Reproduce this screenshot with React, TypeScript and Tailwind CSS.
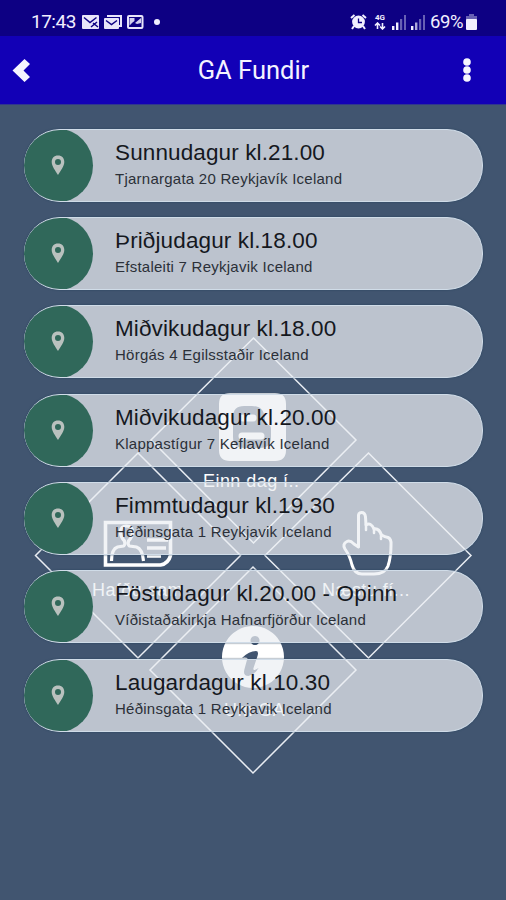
import React from "react";

const meetings = [
  { title: "Sunnudagur kl.21.00", place: "Tjarnargata 20 Reykjavík Iceland" },
  { title: "Þriðjudagur kl.18.00", place: "Efstaleiti 7 Reykjavik Iceland" },
  { title: "Miðvikudagur kl.18.00", place: "Hörgás 4 Egilsstaðir Iceland" },
  { title: "Miðvikudagur kl.20.00", place: "Klappastígur 7 Keflavík Iceland" },
  { title: "Fimmtudagur kl.19.30", place: "Héðinsgata 1 Reykjavik Iceland" },
  { title: "Föstudagur kl.20.00 - Opinn", place: "Víðistaðakirkja Hafnarfjörður Iceland" },
  { title: "Laugardagur kl.10.30", place: "Héðinsgata 1 Reykjavik Iceland" },
];

function Signal({ bars }: { bars: number }) {
  return (
    <svg width="14" height="15" viewBox="0 0 14 15" fill="#f1efff">
      <rect x="0" y="11" width="2.4" height="4" />
      <rect x="4" y="7.5" width="2.4" height="7.5" opacity={bars > 1 ? 1 : 0.7} />
      <rect x="8" y="4" width="2.2" height="11" opacity="0.4" />
      <rect x="12" y="0" width="2" height="15" opacity="0.4" />
    </svg>
  );
}

function StatusBar() {
  return (
    <div className="flex h-9 items-center bg-[#0d0083] pt-2 pl-[31px] pr-[29px] text-[#f1efff]">
      <span className="w-[51px] text-[19px] leading-[28px] tracking-[-0.5px] font-[Roboto,sans-serif]">17:43</span>
      <svg width="65" height="16" viewBox="0 0 65 16">
        <rect x="0" y="1" width="17" height="14" rx="1" fill="#e8e5fa" />
        <path d="M2 3.5l6 5 6.5-5M9 13l6-5M11 9l5 4" stroke="#0d0083" strokeWidth="1.5" fill="none" />
        <path d="M25 2h14v10h-2" stroke="#e8e5fa" strokeWidth="2" fill="none" />
        <rect x="22" y="4" width="15" height="11" rx="1" fill="#e8e5fa" />
        <path d="M24 6.5l5.5 4 5.5-4" stroke="#0d0083" strokeWidth="1.5" fill="none" />
        <rect x="46" y="2" width="14.5" height="12" rx="1" fill="none" stroke="#e8e5fa" strokeWidth="2" />
        <path d="M47.5 4h5v3l-2 1.5-3 3zM53 9l6-5v5l-4 1z" fill="#e8e5fa" opacity="0.9" />
      </svg>
      <span className="ml-[7px] h-[6px] w-[6px] rounded-full bg-[#f1efff]" />
      <div className="ml-auto flex items-center">
        <svg width="17" height="16" viewBox="0 0 17 16">
          <path d="M1 4l3.5-3M16 4l-3.5-3M4 12l-2 3M13 12l2 3" stroke="#f1efff" strokeWidth="2" />
          <circle cx="8.5" cy="8" r="6.4" fill="#f1efff" />
          <path d="M8.5 4.5V8.5h3.5" stroke="#0d0083" strokeWidth="1.3" fill="none" />
        </svg>
        <span className="ml-[6px] flex w-[14px] flex-col items-center font-[Roboto,sans-serif] text-[8px] leading-[8px] font-bold">
          4G
          <svg width="12" height="8" viewBox="0 0 12 8">
            <path d="M3.5 7V1M1 3.5l2.5-2.5L6 3.5M8.5 1v6M6 4.5L8.5 7 11 4.5" stroke="#f1efff" strokeWidth="1.6" fill="none" />
          </svg>
        </span>
        <span className="ml-[5px]"><Signal bars={2} /></span>
        <span className="ml-[5px]"><Signal bars={1} /></span>
        <span className="ml-[5px] w-[36px] whitespace-nowrap text-[18.5px] leading-[28px] tracking-[-0.4px] font-[Roboto,sans-serif]">69%</span>
        <svg width="11" height="16" viewBox="0 0 11 16" fill="#f1efff">
          <path d="M3 0h5v2h3v4H0V2h3z" opacity="0.4" />
          <rect y="5" width="11" height="11" rx="1" />
        </svg>
      </div>
    </div>
  );
}

function AppBar() {
  return (
    <div className="flex h-[69px] items-center justify-between border-b border-[#30368d] bg-[#1200b6] pr-[35px] pl-[12px]">
      <svg width="19" height="25" viewBox="0 0 19 25" fill="#f6f5ff">
        <path d="M12.5 1L.5 12.5l12 11.5 5.500-5L11.500 12.500 18 6z" />
      </svg>
      <h1 className="ml-[13px] font-[Roboto,sans-serif] text-[25.5px] leading-[30px] text-[#f4f3ff]">GA Fundir</h1>
      <svg width="8" height="24" viewBox="0 0 8 24" fill="#f6f5ff">
        <circle cx="4" cy="4" r="3.8" />
        <circle cx="4" cy="12" r="3.8" />
        <circle cx="4" cy="20" r="3.8" />
      </svg>
    </div>
  );
}

/* Diamond menu of the home screen, showing through the list */
function DiamondMenu() {
  const label = "absolute whitespace-nowrap text-[18px] leading-[20px] tracking-[0.45px] text-white";
  return (
    <div className="absolute inset-0">
      <svg className="absolute top-0 left-0" width="506" height="795" viewBox="0 105 506 795" fill="none">
        <g stroke="#e9edf3" strokeWidth="1.5">
          <path d="M253.5 338L356 440 253.5 543 151 440z" />
          <path d="M138 453L240.5 555.5 138 658 35.5 555.5z" />
          <path d="M368.5 453L471 555.5 368.5 658 265 555.5z" />
          <path d="M253 567L356 670 253 773 150 670z" />
        </g>
        <path
          fill="#fff"
          fillRule="evenodd"
          d="M230 393h45q11 0 11 11v46q0 11-11 11h-45q-11 0-11-11v-46q0-11 11-11z M244 406q-11 0-11 11v20q0 11 11 11h16q11 0 11-11v-8q0-4-3-4-3-1-3-4 0-15-13-15z"
        />
        <path d="M243 418h10M242 436h19" stroke="#fff" strokeWidth="7" strokeLinecap="round" />
        <g stroke="#fff" strokeWidth="3.6">
          <path d="M105.5 522.5h65v33q-2 8-10 9.5h-55z" />
          <path d="M111.5 561q0-12 6-14l6-1q2-1 1-5-4-4-4-9 0-6 6-6t6 6q0 5-4 9-1 4 1 5l7 1q6 2 7 14" strokeWidth="3.2" />
          <path d="M147 540h21M147 548h19M147 556h14" />
        </g>
        <path
          d="M358.5 547L358.5 517Q358 512.5 361.5 512.5 365 512.5 365.5 517L366 525Q371 522 374 529 379 528 381.5 535 385 537 388 537.5 391.5 539 391 545 391 557 388 566 385 574 374 574H362Q354.5 574 352 565 350 556 345 549 342 544 347 541.5 350 540 354 544z"
          stroke="#fff" strokeWidth="3" strokeLinejoin="round"
        />
        <path d="M366 524v6M374 529v4M381 534v5" stroke="#fff" strokeWidth="2.5" strokeLinecap="round" />
        <path
          fill="#fff"
          fillRule="evenodd"
          d="M253 626a31 31 0 1 1-.01 0z M255 636a4.5 4.5 0 1 0 .01 0z M242 658q7-7 14-7 3 0 1.5 5l-4 12q-1 4 5 0-4 7-10 8-6 0-4-7l3-11q-3-1-5.5 0z"
        />
      </svg>
      <span className={`${label} top-[366px] left-[203px]`}>Einn dag í..</span>
      <span className={`${label} top-[475px] left-[92px]`}>Hafðu sam</span>
      <span className={`${label} top-[475px] left-[322px]`}>Næstu fí...</span>
      <span className={`${label} top-[595px] left-[224px]`}>Um GA</span>
    </div>
  );
}

function MeetingCard({ title, place }: { title: string; place: string }) {
  return (
    <li className="flex h-[73px] overflow-hidden rounded-[36px] border border-l-0 border-[#d0dce8] bg-[#eceff3]/72 shadow-[0_0_2px_#27405b]">
      <div className="-my-px flex h-[73px] w-[69px] shrink-0 items-center justify-center rounded-[50%] bg-[#30685a] pr-[1px]">
        <svg width="14" height="21" viewBox="0 0 14 21">
          <path fillRule="evenodd" fill="#b9c1be" d="M7 .5C3 .5.7 3.2.7 7c0 4 3.3 8 6.3 13 3-5 6.3-9 6.3-13C13.300 3.200 11 .5 7 .5zM7 4a3 3 0 1 1 0 6 3 3 0 0 1 0-6z" />
        </svg>
      </div>
      <div className="flex flex-col pt-[8px] pl-[22px] whitespace-nowrap">
        <span className="text-[22.5px] leading-[29px] tracking-[0.12px] text-[#15181e]">{title}</span>
        <span className="text-[15px] leading-[24px] tracking-[0.25px] text-[#2b3038]">{place}</span>
      </div>
    </li>
  );
}

export default function App() {
  return (
    <div className="flex h-[900px] w-[506px] flex-col overflow-hidden bg-[#415570] font-['Liberation_Sans',Arial,sans-serif]">
      <StatusBar />
      <AppBar />
      <main className="relative grow">
        <DiamondMenu />
        <ul className="relative flex flex-col gap-[15.4px] pt-[23.5px] pr-[23px] pl-[24px]">
          {meetings.map((m) => (
            <MeetingCard key={m.title} {...m} />
          ))}
        </ul>
      </main>
    </div>
  );
}
